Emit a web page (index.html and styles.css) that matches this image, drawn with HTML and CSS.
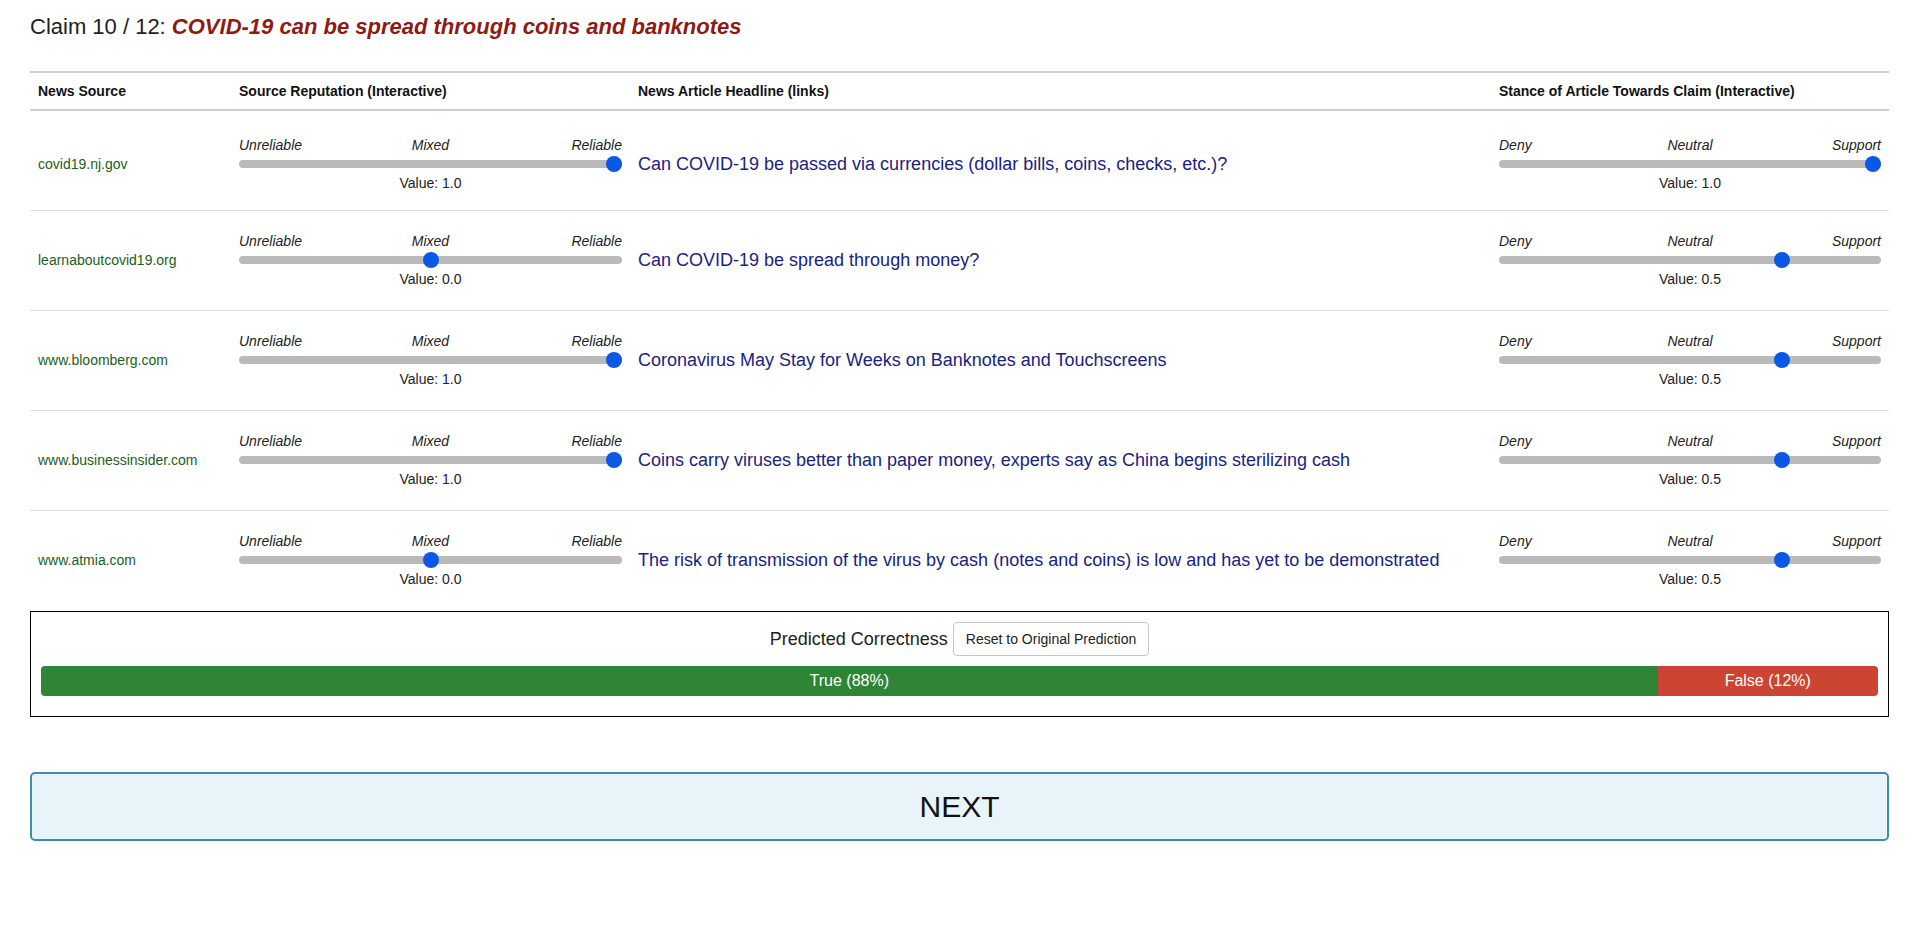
FILE: index.html
```html
<!DOCTYPE html>
<html lang="en">
<head>
<meta charset="utf-8">
<title>Claim 10 / 12</title>
<link rel="stylesheet" href="styles.css">
</head>
<body>
<div class="page">
  <h1 class="title">Claim 10 / 12: <em class="claim">COVID-19 can be spread through coins and banknotes</em></h1>

  <div class="table">
    <div class="row thead">
      <div class="cell">News Source</div>
      <div class="cell">Source Reputation (Interactive)</div>
      <div class="cell">News Article Headline (links)</div>
      <div class="cell">Stance of Article Towards Claim (Interactive)</div>
    </div>

    <div class="row">
      <div class="cell source">covid19.nj.gov</div>
      <div class="cell">
        <div class="slider">
          <div class="labels"><span>Unreliable</span><span>Mixed</span><span class="end">Reliable</span></div>
          <div class="track-zone"><div class="track"></div><div class="thumb" style="--f:1"></div></div>
          <div class="value">Value: 1.0</div>
        </div>
      </div>
      <div class="cell"><a class="headline" href="#">Can COVID-19 be passed via currencies (dollar bills, coins, checks, etc.)?</a></div>
      <div class="cell">
        <div class="slider">
          <div class="labels"><span>Deny</span><span>Neutral</span><span class="end">Support</span></div>
          <div class="track-zone"><div class="track"></div><div class="thumb" style="--f:1"></div></div>
          <div class="value">Value: 1.0</div>
        </div>
      </div>
    </div>

    <div class="row">
      <div class="cell source">learnaboutcovid19.org</div>
      <div class="cell">
        <div class="slider">
          <div class="labels"><span>Unreliable</span><span>Mixed</span><span class="end">Reliable</span></div>
          <div class="track-zone"><div class="track"></div><div class="thumb" style="--f:0.5"></div></div>
          <div class="value">Value: 0.0</div>
        </div>
      </div>
      <div class="cell"><a class="headline" href="#">Can COVID-19 be spread through money?</a></div>
      <div class="cell">
        <div class="slider">
          <div class="labels"><span>Deny</span><span>Neutral</span><span class="end">Support</span></div>
          <div class="track-zone"><div class="track"></div><div class="thumb" style="--f:0.75"></div></div>
          <div class="value">Value: 0.5</div>
        </div>
      </div>
    </div>

    <div class="row">
      <div class="cell source">www.bloomberg.com</div>
      <div class="cell">
        <div class="slider">
          <div class="labels"><span>Unreliable</span><span>Mixed</span><span class="end">Reliable</span></div>
          <div class="track-zone"><div class="track"></div><div class="thumb" style="--f:1"></div></div>
          <div class="value">Value: 1.0</div>
        </div>
      </div>
      <div class="cell"><a class="headline" href="#">Coronavirus May Stay for Weeks on Banknotes and Touchscreens</a></div>
      <div class="cell">
        <div class="slider">
          <div class="labels"><span>Deny</span><span>Neutral</span><span class="end">Support</span></div>
          <div class="track-zone"><div class="track"></div><div class="thumb" style="--f:0.75"></div></div>
          <div class="value">Value: 0.5</div>
        </div>
      </div>
    </div>

    <div class="row">
      <div class="cell source">www.businessinsider.com</div>
      <div class="cell">
        <div class="slider">
          <div class="labels"><span>Unreliable</span><span>Mixed</span><span class="end">Reliable</span></div>
          <div class="track-zone"><div class="track"></div><div class="thumb" style="--f:1"></div></div>
          <div class="value">Value: 1.0</div>
        </div>
      </div>
      <div class="cell"><a class="headline" href="#">Coins carry viruses better than paper money, experts say as China begins sterilizing cash</a></div>
      <div class="cell">
        <div class="slider">
          <div class="labels"><span>Deny</span><span>Neutral</span><span class="end">Support</span></div>
          <div class="track-zone"><div class="track"></div><div class="thumb" style="--f:0.75"></div></div>
          <div class="value">Value: 0.5</div>
        </div>
      </div>
    </div>

    <div class="row">
      <div class="cell source">www.atmia.com</div>
      <div class="cell">
        <div class="slider">
          <div class="labels"><span>Unreliable</span><span>Mixed</span><span class="end">Reliable</span></div>
          <div class="track-zone"><div class="track"></div><div class="thumb" style="--f:0.5"></div></div>
          <div class="value">Value: 0.0</div>
        </div>
      </div>
      <div class="cell"><a class="headline" href="#">The risk of transmission of the virus by cash (notes and coins) is low and has yet to be demonstrated</a></div>
      <div class="cell">
        <div class="slider">
          <div class="labels"><span>Deny</span><span>Neutral</span><span class="end">Support</span></div>
          <div class="track-zone"><div class="track"></div><div class="thumb" style="--f:0.75"></div></div>
          <div class="value">Value: 0.5</div>
        </div>
      </div>
    </div>
  </div>

  <div class="predict">
    <div class="predict-head">
      <span>Predicted Correctness</span>
      <button class="reset" type="button">Reset to Original Prediction</button>
    </div>
    <div class="bar">
      <div class="bar-true" style="width:88%">True (88%)</div>
      <div class="bar-false">False (12%)</div>
    </div>
  </div>

  <button class="next" type="button">NEXT</button>
</div>
</body>
</html>
```

FILE: styles.css
```css
* { box-sizing: border-box; }

body {
  margin: 0;
  background: #fff;
  color: #222;
  font-family: "Liberation Sans", Arial, sans-serif;
}

.page {
  padding: 0 31px 0 30px;
}

.title {
  margin: 14px 0 31px;
  font-size: 22px;
  line-height: 26px;
  font-weight: normal;
  color: #222;
}

.claim {
  color: #8e1b13;
  font-weight: bold;
  font-style: italic;
}

.table {
  border-top: 2px solid #cfcfcf;
}

.row {
  display: grid;
  grid-template-columns: 201px 399px 861px 1fr;
  align-items: center;
  height: 100px;
  padding-bottom: 1px;
  border-bottom: 1px solid #dddddd;
}

.thead + .row {
  padding-bottom: 0;
  padding-top: 7px;
}

.row:last-child {
  border-bottom: none;
  padding-bottom: 2px;
}

.thead {
  height: 38px;
  padding-bottom: 0;
  border-bottom: 2px solid #cfcfcf;
  font-weight: bold;
  font-size: 14px;
  color: #111;
}

.cell {
  padding: 0 8px;
  min-width: 0;
  white-space: nowrap;
}

.source {
  font-size: 14px;
  color: #1b5e20;
}

.headline {
  font-size: 18px;
  color: #1a237e;
  text-decoration: none;
}

.slider {
  width: 100%;
  font-size: 14px;
  color: #222;
}

.labels {
  display: grid;
  grid-template-columns: 1fr auto 1fr;
  line-height: 16px;
  font-style: italic;
}

.labels .end {
  text-align: right;
}

.track-zone {
  position: relative;
  height: 22px;
}

.track {
  position: absolute;
  left: 0;
  right: 0;
  top: 7px;
  height: 8px;
  border-radius: 4px;
  background: #bababa;
}

.thumb {
  position: absolute;
  top: 3px;
  left: calc(var(--f) * (100% - 16px));
  width: 16px;
  height: 16px;
  border-radius: 50%;
  background: #0b57e6;
}

.value {
  line-height: 16px;
  text-align: center;
}

.predict {
  border: 1px solid #000;
  padding: 10px 10px 20px;
}

.predict-head {
  display: flex;
  justify-content: center;
  align-items: center;
  gap: 5px;
  height: 34px;
  font-size: 18px;
  color: #222;
}

.reset {
  height: 34px;
  padding: 0 12px;
  border: 1px solid #c8c8c8;
  border-radius: 4px;
  background: #fff;
  color: #222;
  font-family: "Liberation Sans", Arial, sans-serif;
  font-size: 14px;
}

.bar {
  display: flex;
  margin-top: 10px;
  height: 30px;
  border-radius: 4px;
  overflow: hidden;
  color: #fff;
  font-size: 16px;
  line-height: 30px;
  text-align: center;
}

.bar-true {
  background: #2e8535;
}

.bar-false {
  flex: 1;
  background: #cc4533;
}

.next {
  display: block;
  width: 100%;
  height: 69px;
  margin-top: 55px;
  border: 2px solid #3e8eaa;
  border-radius: 5px;
  background: #e9f3fa;
  color: #111;
  font-family: "Liberation Sans", Arial, sans-serif;
  font-size: 30px;
}
```
